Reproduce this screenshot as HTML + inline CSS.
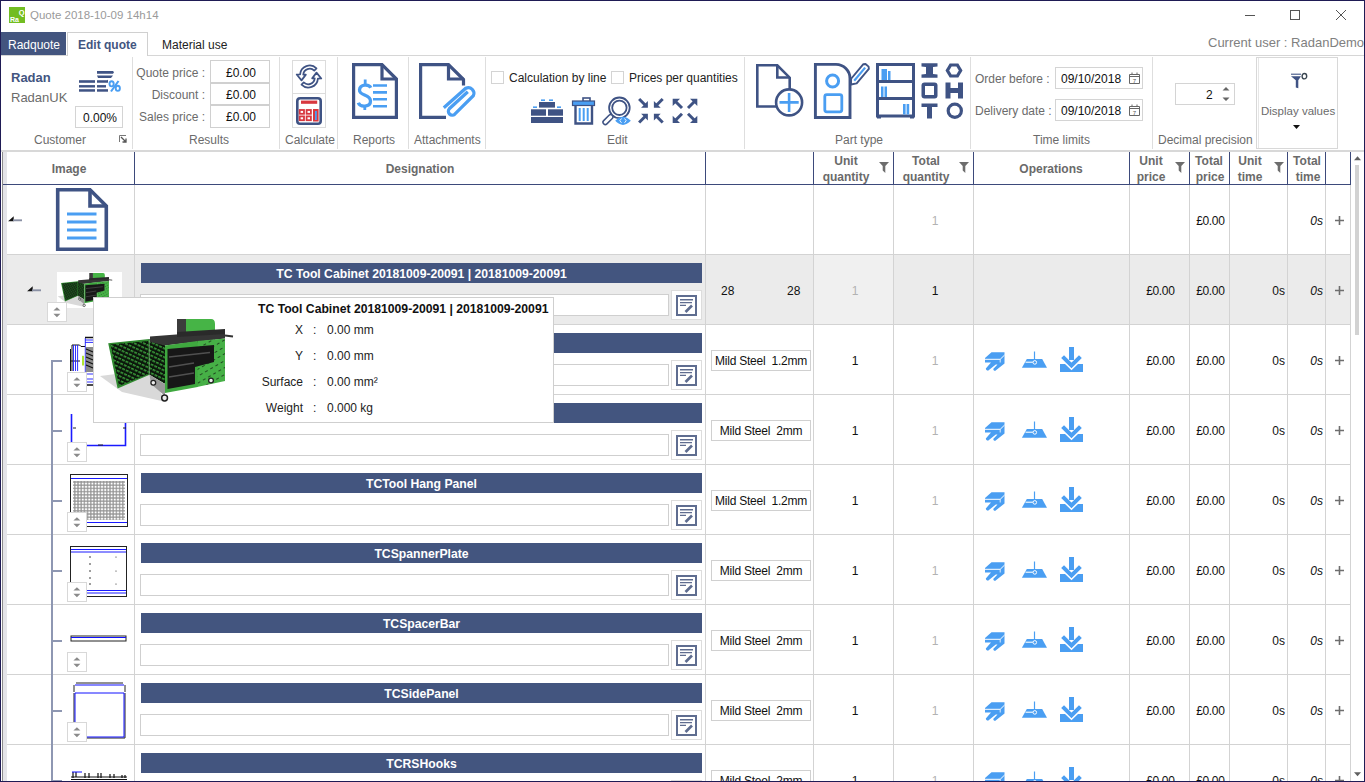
<!DOCTYPE html><html><head><meta charset="utf-8"><style>
html,body{margin:0;padding:0;}
body{width:1365px;height:782px;position:relative;overflow:hidden;background:#fff;font-family:"Liberation Sans",sans-serif;}
.t{position:absolute;white-space:nowrap;line-height:1;}
svg{overflow:visible}
</style></head><body>
<svg style="position:absolute;left:9px;top:7px" width="16" height="16" viewBox="0 0 16 16"><rect width="16" height="16" fill="#72bd22"/><text x="15.5" y="7.5" font-size="7.5" font-weight="bold" fill="#fff" text-anchor="end" font-family="Liberation Sans">Q</text><text x="1" y="15" font-size="7" font-weight="bold" fill="#fff" font-family="Liberation Sans">Ra</text></svg>
<div class="t" style="left:30px;top:10.27px;font-size:11.5px;color:#9a9a9a;font-weight:normal;font-style:normal;">Quote 2018-10-09 14h14</div>
<div style="position:absolute;left:1245px;top:15px;width:10px;height:1px;background:#555"></div>
<div style="position:absolute;left:1290px;top:10px;width:9px;height:9px;border:1px solid #555;box-sizing:border-box;width:10px;height:10px"></div>
<svg style="position:absolute;left:1336px;top:10px" width="10" height="10" viewBox="0 0 10 10"><path d="M0 0L10 10M10 0L0 10" stroke="#555" stroke-width="1"/></svg>
<div style="position:absolute;left:1px;top:32px;width:65px;height:23px;background:#43557f"></div>
<div class="t" style="left:8px;top:38.84px;font-size:12px;color:#fff;font-weight:normal;font-style:normal;">Radquote</div>
<div style="position:absolute;left:67px;top:32px;width:81px;height:24px;border:1px solid #d0d0d0;border-bottom:none;box-sizing:border-box;background:#fff"></div>
<div class="t" style="left:78px;top:38.84px;font-size:12px;color:#43557f;font-weight:bold;font-style:normal;">Edit quote</div>
<div class="t" style="left:162px;top:38.84px;font-size:12px;color:#222;font-weight:normal;font-style:normal;">Material use</div>
<div class="t" style="left:1208px;top:36.0px;font-size:13px;color:#808080;font-weight:normal;font-style:normal;">Current user : RadanDemo</div>
<div style="position:absolute;left:1px;top:55px;width:66px;height:1px;background:#d6d6d6"></div>
<div style="position:absolute;left:148px;top:55px;width:1216px;height:1px;background:#d6d6d6"></div>
<div style="position:absolute;left:1px;top:150px;width:1363px;height:2px;background:#d8d8d8"></div>
<div style="position:absolute;left:132px;top:57px;width:1px;height:92px;background:#dedede"></div>
<div style="position:absolute;left:279px;top:57px;width:1px;height:92px;background:#dedede"></div>
<div style="position:absolute;left:337px;top:57px;width:1px;height:92px;background:#dedede"></div>
<div style="position:absolute;left:408px;top:57px;width:1px;height:92px;background:#dedede"></div>
<div style="position:absolute;left:485px;top:57px;width:1px;height:92px;background:#dedede"></div>
<div style="position:absolute;left:744px;top:57px;width:1px;height:92px;background:#dedede"></div>
<div style="position:absolute;left:970px;top:57px;width:1px;height:92px;background:#dedede"></div>
<div style="position:absolute;left:1152px;top:57px;width:1px;height:92px;background:#dedede"></div>
<div class="t" style="left:11px;top:71.0px;font-size:13px;color:#43557f;font-weight:bold;font-style:normal;">Radan</div>
<div class="t" style="left:11px;top:91.0px;font-size:13px;color:#6b6b6b;font-weight:normal;font-style:normal;">RadanUK</div>
<svg style="position:absolute;left:79px;top:71px" width="42" height="21" viewBox="0 0 42 21"><g fill="#3f5384">
<rect x="0" y="9.2" width="16" height="2.6"/><rect x="0" y="14.1" width="16" height="2.4"/><rect x="0" y="18.2" width="16" height="2.5"/>
<path d="M18 0h16l1 1.3-1 1.4H18z"/><path d="M18 4.5h16l-2 2.5H19z"/><path d="M18 9.2h10l1-.4v2.9H18z"/><rect x="18" y="14.1" width="9" height="2.4"/><rect x="18" y="18.2" width="11" height="2.5"/>
</g><g fill="none" stroke="#4a9ef2"><ellipse cx="32.6" cy="12.8" rx="2.1" ry="2.6" stroke-width="1.9"/><ellipse cx="38.8" cy="17.3" rx="2.1" ry="2.6" stroke-width="1.9"/><path d="M39.5 10L32 20.5" stroke-width="2.1"/></g></svg>
<div style="position:absolute;left:75px;top:106px;width:48px;height:22px;border:1px solid #d4d4d4;box-sizing:border-box"></div>
<div class="t" style="left:83px;top:111.84px;font-size:12px;color:#111;font-weight:normal;font-style:normal;">0.00%</div>
<div class="t" style="left:34px;top:133.84px;font-size:12px;color:#6b6b6b;font-weight:normal;font-style:normal;">Customer</div>
<svg style="position:absolute;left:119px;top:135px" width="8" height="8" viewBox="0 0 8 8"><path d="M0.5 7V0.5H7" stroke="#777" fill="none"/><path d="M2 2L7 7M7 3.5V7H3.5" stroke="#555" fill="none" stroke-width="1.3"/></svg>
<div class="t" style="right:1160px;top:66.84px;font-size:12px;color:#6b6b6b;font-weight:normal;font-style:normal;">Quote price :</div>
<div class="t" style="right:1160px;top:88.84px;font-size:12px;color:#6b6b6b;font-weight:normal;font-style:normal;">Discount :</div>
<div class="t" style="right:1160px;top:110.84px;font-size:12px;color:#6b6b6b;font-weight:normal;font-style:normal;">Sales price :</div>
<div style="position:absolute;left:210px;top:60px;width:60px;height:23px;border:1px solid #d0d0d0;box-sizing:border-box"></div>
<div style="position:absolute;left:210px;top:83px;width:60px;height:22px;border:1px solid #d0d0d0;box-sizing:border-box"></div>
<div style="position:absolute;left:210px;top:105px;width:60px;height:23px;border:1px solid #d0d0d0;box-sizing:border-box"></div>
<div class="t" style="left:226px;top:66.84px;font-size:12px;color:#111;font-weight:normal;font-style:normal;">£0.00</div>
<div class="t" style="left:226px;top:88.84px;font-size:12px;color:#111;font-weight:normal;font-style:normal;">£0.00</div>
<div class="t" style="left:226px;top:110.84px;font-size:12px;color:#111;font-weight:normal;font-style:normal;">£0.00</div>
<div class="t" style="left:189px;top:133.84px;font-size:12px;color:#6b6b6b;font-weight:normal;font-style:normal;">Results</div>
<div style="position:absolute;left:292px;top:60px;width:34px;height:34px;border:1px solid #dcdcdc;box-sizing:border-box"></div>
<div style="position:absolute;left:292px;top:93px;width:34px;height:35px;border:1px solid #dcdcdc;box-sizing:border-box"></div>
<svg style="position:absolute;left:295px;top:64px" width="28" height="25" viewBox="0 0 28 25"><g transform="translate(14,12.5) scale(1.17) translate(-12,-12)" fill="#fff" stroke="#3f5384" stroke-width="1.5" stroke-linejoin="round">
<path d="M4.4 10.2 A8.2 8.2 0 0 1 18.4 5 L16.5 6.9 A5.6 5.6 0 0 0 7.1 10.4 L9.3 10.4 L5.6 15.3 L1.5 10.3 Z"/>
<path d="M19.6 13.8 A8.2 8.2 0 0 1 5.6 19 L7.5 17.1 A5.6 5.6 0 0 0 16.9 13.6 L14.7 13.6 L18.4 8.7 L22.5 13.7 Z"/>
</g></svg>
<svg style="position:absolute;left:296px;top:97px" width="26" height="28" viewBox="0 0 26 28"><rect x="1.3" y="1.3" width="23.4" height="25.4" rx="2.8" fill="#fff" stroke="#3f5384" stroke-width="2.6"/>
<rect x="5" y="3.6" width="16.2" height="3.2" fill="#d8383f"/>
<g fill="none" stroke="#d8383f" stroke-width="1.8"><rect x="3.7" y="13" width="4.3" height="3.8"/><rect x="10.6" y="13" width="4.3" height="3.8"/><rect x="3.7" y="19.4" width="4.3" height="3.8"/><rect x="10.6" y="19.4" width="4.3" height="3.8"/></g>
<rect x="17" y="12" width="5.6" height="12.5" fill="#d8383f"/><rect x="19" y="14" width="1.8" height="9" fill="#4a9ef2"/></svg>
<div class="t" style="left:285px;top:133.84px;font-size:12px;color:#6b6b6b;font-weight:normal;font-style:normal;">Calculate</div>
<svg style="position:absolute;left:352px;top:63px" width="46" height="56" viewBox="0 0 46 56"><path d="M1.6 1.6H30L44.4 16V54.4H1.6Z" fill="#fff" stroke="#3f5384" stroke-width="3.2"/>
<path d="M30 1.6V16H44.4" fill="none" stroke="#3f5384" stroke-width="3.2"/>
<g stroke="#4a9ef2" stroke-width="2.6"><path d="M21 22.5H35M21 29.4H35M21 36.3H35M21 43.2H35"/></g>
<path d="M18.8 24.8 C17 21 8 21 7.5 27 C7 33 18.5 31 18.5 38 C18.5 44.5 8 44.5 6.3 39.8" fill="none" stroke="#4a9ef2" stroke-width="3.3"/>
<path d="M13.2 16.5V23M12.8 43V47" stroke="#4a9ef2" stroke-width="2.8"/></svg>
<div class="t" style="left:353px;top:133.84px;font-size:12px;color:#6b6b6b;font-weight:normal;font-style:normal;">Reports</div>
<svg style="position:absolute;left:419px;top:63px" width="58" height="56" viewBox="0 0 58 56"><path d="M1.6 22V1.6H29.5L44.5 16.5V22.5M1.6 20V54.4H27" fill="none" stroke="#3f5384" stroke-width="3.2"/>
<path d="M29.5 1.6V16H44.5" fill="none" stroke="#3f5384" stroke-width="3.2"/>
<g fill="none" stroke="#4a9ef2" stroke-width="3.2" stroke-linecap="butt" transform="translate(-2.2,1.2)">
<path d="M27 43.5 L49 24 A5.6 5.6 0 0 1 56.5 31.5 L38 50 A3.9 3.9 0 0 1 32.5 44.5 L51 27.5"/>
</g></svg>
<div class="t" style="left:414px;top:133.84px;font-size:12px;color:#6b6b6b;font-weight:normal;font-style:normal;">Attachments</div>
<div style="position:absolute;left:491px;top:71px;width:13px;height:13px;border:1px solid #d4d4d4;box-sizing:border-box"></div>
<div class="t" style="left:509px;top:71.84px;font-size:12px;color:#222;font-weight:normal;font-style:normal;">Calculation by line</div>
<div style="position:absolute;left:611px;top:71px;width:13px;height:13px;border:1px solid #d4d4d4;box-sizing:border-box"></div>
<div class="t" style="left:629px;top:71.84px;font-size:12px;color:#222;font-weight:normal;font-style:normal;">Prices per quantities</div>
<svg style="position:absolute;left:531px;top:99px" width="33" height="24" viewBox="0 0 33 24"><g fill="#3f5384"><rect x="0" y="18" width="32" height="6"/><rect x="0" y="10.3" width="15" height="6.4"/><rect x="17" y="10.3" width="15" height="6.4"/><rect x="8" y="3" width="16" height="5.6"/></g>
<g fill="#4a9ef2"><rect x="10" y="0.4" width="4" height="1.6"/><rect x="18" y="0.4" width="4" height="1.6"/><rect x="2" y="7.4" width="4" height="1.6"/><rect x="26" y="7.4" width="4" height="1.6"/></g></svg>
<svg style="position:absolute;left:572px;top:97px" width="23" height="28" viewBox="0 0 23 28"><rect x="11" y="1" width="7" height="3.5" fill="none" stroke="#3f5384" stroke-width="1.6"/>
<rect x="0.5" y="4" width="22" height="4.5" fill="#4a9ef2" stroke="#3f5384" stroke-width="1.2"/>
<path d="M3.5 9V26.5H20V9" fill="none" stroke="#3f5384" stroke-width="2.4"/>
<g stroke="#4a9ef2" stroke-width="2"><path d="M7.7 11V24M11.7 11V24M15.7 11V24"/></g></svg>
<svg style="position:absolute;left:603px;top:97px" width="29" height="29" viewBox="0 0 29 29"><circle cx="16.4" cy="10.8" r="10.3" fill="none" stroke="#3f5384" stroke-width="1.8"/>
<circle cx="16.4" cy="10.8" r="7.2" fill="none" stroke="#3f5384" stroke-width="1.8"/>
<g transform="translate(8.5,19) rotate(-45)"><rect x="-11" y="-2.3" width="12" height="4.6" rx="2.2" fill="#fff" stroke="#3f5384" stroke-width="1.5"/></g>
<path d="M12.2 23.8 Q20 15.5 27.8 23.8 Q20 32 12.2 23.8Z" fill="#4a9ef2"/><path d="M18.5 21.5L16.8 23.7L18.5 25.8M21.5 21.5L23.2 23.7L21.5 25.8" stroke="#fff" stroke-width="0.9" fill="none"/></svg>
<svg style="position:absolute;left:639px;top:99px" width="25" height="25" viewBox="0 0 25 25"><g transform="translate(8.6,8.5) rotate(0)"><path d="M-8.5 -8.5L-2.5 -2.5" stroke="#3f5384" stroke-width="3"/><path d="M0.3 0.3H-6.5L0.3 -6.5Z" fill="#3f5384"/></g><g transform="translate(15.2,8.5) rotate(90)"><path d="M-8.5 -8.5L-2.5 -2.5" stroke="#3f5384" stroke-width="3"/><path d="M0.3 0.3H-6.5L0.3 -6.5Z" fill="#3f5384"/></g><g transform="translate(8.6,15) rotate(270)"><path d="M-8.5 -8.5L-2.5 -2.5" stroke="#3f5384" stroke-width="3"/><path d="M0.3 0.3H-6.5L0.3 -6.5Z" fill="#3f5384"/></g><g transform="translate(15.2,15) rotate(180)"><path d="M-8.5 -8.5L-2.5 -2.5" stroke="#3f5384" stroke-width="3"/><path d="M0.3 0.3H-6.5L0.3 -6.5Z" fill="#3f5384"/></g></svg>
<svg style="position:absolute;left:672px;top:98px" width="26" height="26" viewBox="0 0 26 26"><g transform="translate(1,1) rotate(180)"><path d="M-9 -9L-2.5 -2.5" stroke="#3f5384" stroke-width="3"/><path d="M0.3 0.3H-7L0.3 -7Z" fill="#3f5384"/></g><g transform="translate(25,1) rotate(270)"><path d="M-9 -9L-2.5 -2.5" stroke="#3f5384" stroke-width="3"/><path d="M0.3 0.3H-7L0.3 -7Z" fill="#3f5384"/></g><g transform="translate(1,24.8) rotate(90)"><path d="M-9 -9L-2.5 -2.5" stroke="#3f5384" stroke-width="3"/><path d="M0.3 0.3H-7L0.3 -7Z" fill="#3f5384"/></g><g transform="translate(25,24.8) rotate(0)"><path d="M-9 -9L-2.5 -2.5" stroke="#3f5384" stroke-width="3"/><path d="M0.3 0.3H-7L0.3 -7Z" fill="#3f5384"/></g></svg>
<div class="t" style="left:607px;top:133.84px;font-size:12px;color:#6b6b6b;font-weight:normal;font-style:normal;">Edit</div>
<svg style="position:absolute;left:756px;top:64px" width="48" height="54" viewBox="0 0 48 54"><path d="M23 42.5H1.3V1.3H21.3L33.7 13.7V25" fill="none" stroke="#3f5384" stroke-width="2.6"/>
<path d="M21.3 1.3V13.5H33.7" fill="none" stroke="#3f5384" stroke-width="2.6"/>
<circle cx="33.1" cy="38.4" r="13" fill="#fff" stroke="#3f5384" stroke-width="2.6"/>
<path d="M33.1 29V48M23.5 38.4H42.7" stroke="#4a9ef2" stroke-width="2.6"/></svg>
<svg style="position:absolute;left:814px;top:63px" width="58" height="56" viewBox="0 0 58 56"><path d="M1.4 1.4H22 A14 14 0 0 1 36 15.4V54.5H1.4Z" fill="#fff" stroke="#3f5384" stroke-width="2.9"/>
<circle cx="18.6" cy="18" r="6" fill="none" stroke="#4a9ef2" stroke-width="3"/>
<rect x="10.8" y="31.6" width="17" height="17.2" rx="2" fill="none" stroke="#4a9ef2" stroke-width="2.8"/>
<g transform="translate(37,21.5) rotate(-50)"><path d="M0 0L4.5 -3.6H23.5L25 -2V2L23.5 3.6H4.5Z" fill="#fff" stroke="#3f5384" stroke-width="1.9" stroke-linejoin="round"/><path d="M5 0H22" stroke="#4a9ef2" stroke-width="2.2"/></g></svg>
<svg style="position:absolute;left:876px;top:63px" width="39" height="56" viewBox="0 0 39 56"><rect x="1.5" y="1.5" width="36" height="51.5" fill="none" stroke="#3f5384" stroke-width="3"/>
<path d="M1.5 18.5H37.5M1.5 35.5H37.5" stroke="#3f5384" stroke-width="3"/>
<path d="M1 52V55.5H5V52M34 52V55.5H38V52" fill="#3f5384"/>
<g fill="#4a9ef2"><rect x="5.5" y="6" width="5.5" height="11"/><rect x="12" y="8" width="2.5" height="9"/><rect x="5" y="23.5" width="2.5" height="10.5"/><rect x="8.5" y="23.5" width="2.5" height="10.5"/><rect x="27" y="41" width="2.6" height="10.5"/><rect x="30.6" y="41" width="2.6" height="10.5"/></g></svg>
<svg style="position:absolute;left:921px;top:63px" width="43" height="56" viewBox="0 0 43 56"><g fill="#3f5384">
<path d="M0.5 0.3H16.5V3.5L12 4V11L16.5 11.5V14.7H0.5V11.5L5 11V4L0.5 3.5Z"/>
<rect x="0.5" y="19.5" width="16" height="16" rx="3"/>
<path d="M0.5 40.5H16.5V44H11V55.5H6V44H0.5Z"/>
<path d="M24.5 7.5L28.7 0.5H37.3L41.5 7.5L37.3 14.5H28.7Z"/>
<path d="M24.5 19.5H29.5V25H37V19.5H42V35.5H37V30H29.5V35.5H24.5Z"/>
<circle cx="33.8" cy="47.7" r="8.2"/>
</g>
<rect x="4" y="23" width="9" height="9" fill="#fff"/>
<path d="M28.2 7.5L30.6 3.5H35.4L37.8 7.5L35.4 11.5H30.6Z" fill="#fff"/>
<circle cx="33.8" cy="47.7" r="5" fill="#fff"/></svg>
<div class="t" style="left:835px;top:133.84px;font-size:12px;color:#6b6b6b;font-weight:normal;font-style:normal;">Part type</div>
<div class="t" style="left:975px;top:72.84px;font-size:12px;color:#6b6b6b;font-weight:normal;font-style:normal;">Order before :</div>
<div class="t" style="left:975px;top:104.84px;font-size:12px;color:#6b6b6b;font-weight:normal;font-style:normal;">Delivery date :</div>
<div style="position:absolute;left:1055px;top:67px;width:88px;height:22px;border:1px solid #d4d4d4;box-sizing:border-box"></div>
<div class="t" style="left:1061px;top:72.84px;font-size:12px;color:#111;font-weight:normal;font-style:normal;">09/10/2018</div>
<svg style="position:absolute;left:1129px;top:72px" width="11" height="12" viewBox="0 0 11 12"><path d="M0.5 2.5H10.5V11.5H0.5Z M0.5 4.5H10.5" fill="none" stroke="#666" stroke-width="1"/><path d="M3 0.5V3M8 0.5V3" stroke="#666"/><text x="5.5" y="10.5" font-size="6" text-anchor="middle" fill="#555" font-family="Liberation Sans">7</text></svg>
<div style="position:absolute;left:1055px;top:99px;width:88px;height:22px;border:1px solid #d4d4d4;box-sizing:border-box"></div>
<div class="t" style="left:1061px;top:104.84px;font-size:12px;color:#111;font-weight:normal;font-style:normal;">09/10/2018</div>
<svg style="position:absolute;left:1129px;top:104px" width="11" height="12" viewBox="0 0 11 12"><path d="M0.5 2.5H10.5V11.5H0.5Z M0.5 4.5H10.5" fill="none" stroke="#666" stroke-width="1"/><path d="M3 0.5V3M8 0.5V3" stroke="#666"/><text x="5.5" y="10.5" font-size="6" text-anchor="middle" fill="#555" font-family="Liberation Sans">7</text></svg>
<div class="t" style="left:1033px;top:133.84px;font-size:12px;color:#6b6b6b;font-weight:normal;font-style:normal;">Time limits</div>
<div style="position:absolute;left:1175px;top:83px;width:60px;height:22px;border:1px solid #d4d4d4;box-sizing:border-box"></div>
<div class="t" style="left:1206px;top:88.84px;font-size:12px;color:#111;font-weight:normal;font-style:normal;">2</div>
<svg style="position:absolute;left:1222px;top:86px" width="8" height="16" viewBox="0 0 8 16"><path d="M0.5 4.5L4 1L7.5 4.5Z M0.5 11.5L4 15L7.5 11.5Z" fill="#666"/></svg>
<div class="t" style="left:1158px;top:133.84px;font-size:12px;color:#6b6b6b;font-weight:normal;font-style:normal;">Decimal precision</div>
<div style="position:absolute;left:1256px;top:57px;width:82px;height:92px;border:1px solid #d8d8d8;box-sizing:border-box"></div>
<div style="position:absolute;left:1258px;top:58px;width:1px;height:90px;background:#e6e6e6"></div>
<svg style="position:absolute;left:1290px;top:73px" width="18" height="16" viewBox="0 0 18 16"><path d="M1 1.2H11" stroke="#3f5384" stroke-width="1.1"/><path d="M1 3.2H11L8.3 7.3V15.2L5.8 14.6V7.3Z" fill="#3f5384"/><ellipse cx="14.4" cy="3.2" rx="2.3" ry="2.7" fill="none" stroke="#3b4752" stroke-width="1.4"/></svg>
<div class="t" style="left:1261px;top:106.27px;font-size:11.5px;color:#6b6b6b;font-weight:normal;font-style:normal;">Display values</div>
<svg style="position:absolute;left:1293px;top:125px" width="8" height="5" viewBox="0 0 8 5"><path d="M0 0H7L3.5 4Z" fill="#111"/></svg>
<div style="position:absolute;left:2px;top:152px;width:1px;height:629px;background:#8c8c8c"></div>
<div style="position:absolute;left:3px;top:152px;width:4px;height:629px;background:#e4e4e8"></div>
<div style="position:absolute;left:3px;top:184px;width:1348px;height:1px;background:#3d4a7b"></div>
<div style="position:absolute;left:134px;top:152px;width:1px;height:33px;background:#3d4a7b"></div>
<div style="position:absolute;left:705px;top:152px;width:1px;height:33px;background:#3d4a7b"></div>
<div style="position:absolute;left:813px;top:152px;width:1px;height:33px;background:#3d4a7b"></div>
<div style="position:absolute;left:893px;top:152px;width:1px;height:33px;background:#3d4a7b"></div>
<div style="position:absolute;left:973px;top:152px;width:1px;height:33px;background:#3d4a7b"></div>
<div style="position:absolute;left:1129px;top:152px;width:1px;height:33px;background:#3d4a7b"></div>
<div style="position:absolute;left:1189px;top:152px;width:1px;height:33px;background:#3d4a7b"></div>
<div style="position:absolute;left:1229px;top:152px;width:1px;height:33px;background:#3d4a7b"></div>
<div style="position:absolute;left:1287px;top:152px;width:1px;height:33px;background:#3d4a7b"></div>
<div style="position:absolute;left:1325px;top:152px;width:1px;height:33px;background:#3d4a7b"></div>
<div style="position:absolute;left:1350px;top:152px;width:1px;height:33px;background:#3d4a7b"></div>
<div class="t" style="left:69px;transform:translateX(-50%);top:162.84px;font-size:12px;color:#6a6a6a;font-weight:bold;font-style:normal;">Image</div>
<div class="t" style="left:420px;transform:translateX(-50%);top:162.84px;font-size:12px;color:#6a6a6a;font-weight:bold;font-style:normal;">Designation</div>
<div class="t" style="left:846px;transform:translateX(-50%);top:154.84px;font-size:12px;color:#6a6a6a;font-weight:bold;font-style:normal;">Unit</div>
<div class="t" style="left:846px;transform:translateX(-50%);top:170.84px;font-size:12px;color:#6a6a6a;font-weight:bold;font-style:normal;">quantity</div>
<svg style="position:absolute;left:879px;top:162px" width="10" height="11" viewBox="0 0 10 11"><path d="M0 0H10L6.3 4V11L3.7 8.5V4Z" fill="#6d6d6d"/></svg>
<div class="t" style="left:926px;transform:translateX(-50%);top:154.84px;font-size:12px;color:#6a6a6a;font-weight:bold;font-style:normal;">Total</div>
<div class="t" style="left:926px;transform:translateX(-50%);top:170.84px;font-size:12px;color:#6a6a6a;font-weight:bold;font-style:normal;">quantity</div>
<svg style="position:absolute;left:959px;top:162px" width="10" height="11" viewBox="0 0 10 11"><path d="M0 0H10L6.3 4V11L3.7 8.5V4Z" fill="#6d6d6d"/></svg>
<div class="t" style="left:1051px;transform:translateX(-50%);top:162.84px;font-size:12px;color:#6a6a6a;font-weight:bold;font-style:normal;">Operations</div>
<div class="t" style="left:1151px;transform:translateX(-50%);top:154.84px;font-size:12px;color:#6a6a6a;font-weight:bold;font-style:normal;">Unit</div>
<div class="t" style="left:1151px;transform:translateX(-50%);top:170.84px;font-size:12px;color:#6a6a6a;font-weight:bold;font-style:normal;">price</div>
<svg style="position:absolute;left:1175px;top:162px" width="10" height="11" viewBox="0 0 10 11"><path d="M0 0H10L6.3 4V11L3.7 8.5V4Z" fill="#6d6d6d"/></svg>
<div class="t" style="left:1209px;transform:translateX(-50%);top:154.84px;font-size:12px;color:#6a6a6a;font-weight:bold;font-style:normal;">Total</div>
<div class="t" style="left:1210px;transform:translateX(-50%);top:170.84px;font-size:12px;color:#6a6a6a;font-weight:bold;font-style:normal;">price</div>
<div class="t" style="left:1250px;transform:translateX(-50%);top:154.84px;font-size:12px;color:#6a6a6a;font-weight:bold;font-style:normal;">Unit</div>
<div class="t" style="left:1250px;transform:translateX(-50%);top:170.84px;font-size:12px;color:#6a6a6a;font-weight:bold;font-style:normal;">time</div>
<svg style="position:absolute;left:1274px;top:162px" width="10" height="11" viewBox="0 0 10 11"><path d="M0 0H10L6.3 4V11L3.7 8.5V4Z" fill="#6d6d6d"/></svg>
<div class="t" style="left:1307px;transform:translateX(-50%);top:154.84px;font-size:12px;color:#6a6a6a;font-weight:bold;font-style:normal;">Total</div>
<div class="t" style="left:1308px;transform:translateX(-50%);top:170.84px;font-size:12px;color:#6a6a6a;font-weight:bold;font-style:normal;">time</div>
<div style="position:absolute;left:7px;top:255px;width:1343px;height:69px;background:#ebebeb"></div>
<div style="position:absolute;left:813px;top:255px;width:80px;height:69px;background:#f0f0f0"></div>
<div style="position:absolute;left:134px;top:185px;width:1px;height:596px;background:#d3d3d3"></div>
<div style="position:absolute;left:705px;top:185px;width:1px;height:596px;background:#d3d3d3"></div>
<div style="position:absolute;left:813px;top:185px;width:1px;height:596px;background:#d3d3d3"></div>
<div style="position:absolute;left:893px;top:185px;width:1px;height:596px;background:#d3d3d3"></div>
<div style="position:absolute;left:973px;top:185px;width:1px;height:596px;background:#d3d3d3"></div>
<div style="position:absolute;left:1129px;top:185px;width:1px;height:596px;background:#d3d3d3"></div>
<div style="position:absolute;left:1189px;top:185px;width:1px;height:596px;background:#d3d3d3"></div>
<div style="position:absolute;left:1229px;top:185px;width:1px;height:596px;background:#d3d3d3"></div>
<div style="position:absolute;left:1287px;top:185px;width:1px;height:596px;background:#d3d3d3"></div>
<div style="position:absolute;left:1325px;top:185px;width:1px;height:596px;background:#d3d3d3"></div>
<div style="position:absolute;left:1350px;top:185px;width:1px;height:596px;background:#d3d3d3"></div>
<div style="position:absolute;left:7px;top:254px;width:1343px;height:1px;background:#d3d3d3"></div>
<div style="position:absolute;left:7px;top:324px;width:1343px;height:1px;background:#d3d3d3"></div>
<div style="position:absolute;left:7px;top:394px;width:1343px;height:1px;background:#d3d3d3"></div>
<div style="position:absolute;left:7px;top:464px;width:1343px;height:1px;background:#d3d3d3"></div>
<div style="position:absolute;left:7px;top:534px;width:1343px;height:1px;background:#d3d3d3"></div>
<div style="position:absolute;left:7px;top:604px;width:1343px;height:1px;background:#d3d3d3"></div>
<div style="position:absolute;left:7px;top:674px;width:1343px;height:1px;background:#d3d3d3"></div>
<div style="position:absolute;left:7px;top:744px;width:1343px;height:1px;background:#d3d3d3"></div>
<svg style="position:absolute;left:8px;top:216px" width="16" height="7" viewBox="0 0 16 7"><path d="M0.1 5.2L5.7 0.3V5.2Z" fill="#111"/><path d="M5 4.3H14" stroke="#8a90a4" stroke-width="1.9"/></svg>
<svg style="position:absolute;left:55px;top:187px" width="54" height="65" viewBox="0 0 54 65"><path d="M2.7 2.7H35L51.3 19V62.3H2.7Z" fill="#fff" stroke="#3f5384" stroke-width="3.6"/>
<path d="M35 2.7V19H51.3" fill="none" stroke="#3f5384" stroke-width="3.6"/>
<g stroke="#4a9ef2" stroke-width="3.2"><path d="M12 27H41.5M12 35H41.5M12 43H41.5M12 51H41.5"/></g></svg>
<div class="t" style="left:935px;transform:translateX(-50%);top:214.84px;font-size:12px;color:#b2b2b2;font-weight:normal;font-style:normal;">1</div>
<div class="t" style="right:140.5px;top:214.84px;font-size:12px;color:#111;font-weight:normal;font-style:normal;letter-spacing:-0.35px">£0.00</div>
<div class="t" style="right:42px;top:214.84px;font-size:12px;color:#111;font-weight:normal;font-style:italic;">0s</div>
<svg style="position:absolute;left:1335px;top:215.5px" width="9" height="9" viewBox="0 0 9 9"><path d="M4.5 0V9M0 4.5H9" stroke="#6e6e6e" stroke-width="1.6"/></svg>
<svg style="position:absolute;left:27px;top:286px" width="16" height="7" viewBox="0 0 16 7"><path d="M0.1 5.2L5.7 0.3V5.2Z" fill="#111"/><path d="M5 4.3H14" stroke="#8a90a4" stroke-width="1.9"/></svg>
<div style="position:absolute;left:57px;top:272px;width:65px;height:36px;background:#fff"></div>
<svg style="position:absolute;left:0;top:0" width="1365" height="782"><defs><pattern id="tex" width="4" height="4" patternUnits="userSpaceOnUse" patternTransform="rotate(25)"><rect width="4" height="4" fill="#0b150b"/><rect x="0" y="1" width="3" height="1.6" fill="#3a9a3a"/></pattern>
<pattern id="tex2" width="6" height="6" patternUnits="userSpaceOnUse" patternTransform="rotate(-30)"><rect width="6" height="6" fill="#46b046"/><rect x="1" y="2" width="3" height="1" fill="#234d23"/></pattern></defs><g transform="translate(57.7,270.1) scale(0.41)">
<path d="M0 64L48 58L66 90L22 80Z" fill="#d9d9d9"/>
<path d="M8.2 31.3L49.5 27L49.5 62.7L17.6 76.5Z" fill="#2f8a2f"/>
<path d="M10.5 32.5L48.5 29L48.5 62L19 74Z" fill="url(#tex)"/>
<path d="M49.5 27L65 33L65 72L49.5 62.7Z" fill="url(#tex)"/><path d="M49.5 62.7L65 72L65 84L51 72Z" fill="#9a9a9a"/>
<path d="M50 24.5L125 18.8L125 26.5L65 33.5L50 30Z" fill="#353535"/>
<path d="M77 7H86V24H77Z" fill="#3c3c3c"/>
<path d="M86 7H111Q115 7 115 12V19L86 23Z" fill="#46b446"/>
<path d="M77 20L125 17V22L77 25Z" fill="#2a2a2a"/>
<path d="M97 29L125 26.5L125 69L97 75Z" fill="url(#tex2)"/>
<path d="M65 33.5L97.6 29L97.6 75L65 81Z" fill="#3fa83f"/>
<path d="M67.5 37L114 33L114 50L95 55L95 72L67.5 77Z" fill="#171717"/>
<path d="M69 45L110 40.5M69 55L94 51M69 65L94 61" stroke="#505050" stroke-width="1.6"/>

<path d="M125 23.5L133 24.5" stroke="#333" stroke-width="2"/>
<circle cx="53.3" cy="70.8" r="2.4" fill="#eee" stroke="#222" stroke-width="1.3"/>
<circle cx="64.6" cy="86" r="2.9" fill="#eee" stroke="#222" stroke-width="1.5"/>
<circle cx="111" cy="68.5" r="2.4" fill="#eee" stroke="#222" stroke-width="1.3"/>
</g></svg>
<div style="position:absolute;left:47px;top:302px;width:20px;height:20px;border:1px solid #d8d8d8;box-sizing:border-box;background:#fff"></div>
<svg style="position:absolute;left:53px;top:307px" width="8" height="11" viewBox="0 0 8 11"><path d="M0.4 3.6L3.9 0.2L7.4 3.6Z M0.4 6.8L3.9 10.2L7.4 6.8Z" fill="#8a8a8a"/></svg>
<div style="position:absolute;left:141px;top:263px;width:561px;height:20px;background:#43557f"></div>
<div class="t" style="left:421.5px;transform:translateX(-50%);top:267.67px;font-size:12.2px;color:#fff;font-weight:bold;font-style:normal;">TC Tool Cabinet 20181009-20091 | 20181009-20091</div>
<div style="position:absolute;left:140px;top:294px;width:529px;height:22px;border:1px solid #cfcfcf;box-sizing:border-box;background:#fff"></div>
<div style="position:absolute;left:671px;top:290px;width:31px;height:30px;border:1px solid #dcdcdc;box-sizing:border-box;background:#fff"></div>
<svg style="position:absolute;left:676px;top:295px" width="21" height="21" viewBox="0 0 21 21"><rect x="1" y="1" width="19" height="19" fill="none" stroke="#5f6d90" stroke-width="2"/>
<path d="M4 4.8H17M4 7.6H16M4 10.4H10" stroke="#5f6d90" stroke-width="1.4"/><path d="M9.5 17L16 10.5" stroke="#5f6d90" stroke-width="2.6"/></svg>
<div class="t" style="left:721px;top:284.84px;font-size:12px;color:#111;font-weight:normal;font-style:normal;">28</div>
<div class="t" style="left:787px;top:284.84px;font-size:12px;color:#111;font-weight:normal;font-style:normal;">28</div>
<div class="t" style="left:855px;transform:translateX(-50%);top:284.84px;font-size:12px;color:#b2b2b2;font-weight:normal;font-style:normal;">1</div>
<div class="t" style="left:935px;transform:translateX(-50%);top:284.84px;font-size:12px;color:#111;font-weight:normal;font-style:normal;">1</div>
<div class="t" style="right:190.5px;top:284.84px;font-size:12px;color:#111;font-weight:normal;font-style:normal;letter-spacing:-0.35px">£0.00</div>
<div class="t" style="right:140.5px;top:284.84px;font-size:12px;color:#111;font-weight:normal;font-style:normal;letter-spacing:-0.35px">£0.00</div>
<div class="t" style="right:80px;top:284.84px;font-size:12px;color:#111;font-weight:normal;font-style:normal;">0s</div>
<div class="t" style="right:42px;top:284.84px;font-size:12px;color:#111;font-weight:normal;font-style:italic;">0s</div>
<svg style="position:absolute;left:1335px;top:285.5px" width="9" height="9" viewBox="0 0 9 9"><path d="M4.5 0V9M0 4.5H9" stroke="#6e6e6e" stroke-width="1.6"/></svg>
<div style="position:absolute;left:51px;top:360px;width:2px;height:421px;background:#8e97b2"></div>
<div style="position:absolute;left:51px;top:360px;width:11px;height:2px;background:#8e97b2"></div>
<div style="position:absolute;left:141px;top:333px;width:561px;height:20px;background:#43557f"></div>
<div style="position:absolute;left:140px;top:364px;width:529px;height:22px;border:1px solid #cfcfcf;box-sizing:border-box;background:#fff"></div>
<div style="position:absolute;left:671px;top:360px;width:31px;height:30px;border:1px solid #dcdcdc;box-sizing:border-box;background:#fff"></div>
<svg style="position:absolute;left:676px;top:365px" width="21" height="21" viewBox="0 0 21 21"><rect x="1" y="1" width="19" height="19" fill="none" stroke="#5f6d90" stroke-width="2"/>
<path d="M4 4.8H17M4 7.6H16M4 10.4H10" stroke="#5f6d90" stroke-width="1.4"/><path d="M9.5 17L16 10.5" stroke="#5f6d90" stroke-width="2.6"/></svg>
<div style="position:absolute;left:711px;top:350px;width:100px;height:21px;border:1px solid #d0d0d0;box-sizing:border-box;background:#fff"></div>
<div class="t" style="left:761px;transform:translateX(-50%);top:354.84px;font-size:12px;color:#111;font-weight:normal;font-style:normal;letter-spacing:-0.25px">Mild Steel&nbsp; 1.2mm</div>
<div class="t" style="left:855px;transform:translateX(-50%);top:354.84px;font-size:12px;color:#111;font-weight:normal;font-style:normal;">1</div>
<div class="t" style="left:935px;transform:translateX(-50%);top:354.84px;font-size:12px;color:#b2b2b2;font-weight:normal;font-style:normal;">1</div>
<svg style="position:absolute;left:985px;top:352px" width="20" height="19" viewBox="0 0 20 19"><path d="M0 6 L6.5 0.3 H19.5 V11.5 L10 19 Q8.3 18.6 8.2 17 L12.5 12.5 H10.8 L3 18.8 Q0.8 18.3 0.8 16.5 L6 10.5 H0 Z" fill="#4a9ef2"/>
<path d="M0 7.3 H15.2 L19.6 3" stroke="#fff" stroke-width="1" fill="none"/><path d="M15.2 7.3 V10.5" stroke="#fff" stroke-width="0.8"/></svg>
<svg style="position:absolute;left:1021px;top:351px" width="26" height="17" viewBox="0 0 26 17"><path d="M13.5 0.5V8" stroke="#4a9ef2" stroke-width="1.2"/><path d="M5.8 8H21.2L26 16.8H0.9Z" fill="#4a9ef2"/><path d="M4.5 11.2H11.8" stroke="#fff" stroke-width="1.1"/><circle cx="13.8" cy="11.4" r="1.8" fill="none" stroke="#fff" stroke-width="1"/></svg>
<svg style="position:absolute;left:1060px;top:347px" width="23" height="25" viewBox="0 0 23 25"><rect x="9" y="0" width="5" height="13" fill="#4a9ef2"/><path d="M2.6 9.6L11.5 18.5L20.4 9.6" fill="none" stroke="#4a9ef2" stroke-width="4"/><path d="M0 17H5L11.5 23.2L18 17H23V25H0Z" fill="#4a9ef2"/></svg>
<div class="t" style="right:190.5px;top:354.84px;font-size:12px;color:#111;font-weight:normal;font-style:normal;letter-spacing:-0.35px">£0.00</div>
<div class="t" style="right:140.5px;top:354.84px;font-size:12px;color:#111;font-weight:normal;font-style:normal;letter-spacing:-0.35px">£0.00</div>
<div class="t" style="right:80px;top:354.84px;font-size:12px;color:#111;font-weight:normal;font-style:normal;">0s</div>
<div class="t" style="right:42px;top:354.84px;font-size:12px;color:#111;font-weight:normal;font-style:italic;">0s</div>
<svg style="position:absolute;left:1335px;top:355.5px" width="9" height="9" viewBox="0 0 9 9"><path d="M4.5 0V9M0 4.5H9" stroke="#6e6e6e" stroke-width="1.6"/></svg>
<div style="position:absolute;left:51px;top:430px;width:11px;height:2px;background:#8e97b2"></div>
<div style="position:absolute;left:141px;top:403px;width:561px;height:20px;background:#43557f"></div>
<div style="position:absolute;left:140px;top:434px;width:529px;height:22px;border:1px solid #cfcfcf;box-sizing:border-box;background:#fff"></div>
<div style="position:absolute;left:671px;top:430px;width:31px;height:30px;border:1px solid #dcdcdc;box-sizing:border-box;background:#fff"></div>
<svg style="position:absolute;left:676px;top:435px" width="21" height="21" viewBox="0 0 21 21"><rect x="1" y="1" width="19" height="19" fill="none" stroke="#5f6d90" stroke-width="2"/>
<path d="M4 4.8H17M4 7.6H16M4 10.4H10" stroke="#5f6d90" stroke-width="1.4"/><path d="M9.5 17L16 10.5" stroke="#5f6d90" stroke-width="2.6"/></svg>
<div style="position:absolute;left:711px;top:420px;width:100px;height:21px;border:1px solid #d0d0d0;box-sizing:border-box;background:#fff"></div>
<div class="t" style="left:761px;transform:translateX(-50%);top:424.84px;font-size:12px;color:#111;font-weight:normal;font-style:normal;letter-spacing:-0.25px">Mild Steel&nbsp; 2mm</div>
<div class="t" style="left:855px;transform:translateX(-50%);top:424.84px;font-size:12px;color:#111;font-weight:normal;font-style:normal;">1</div>
<div class="t" style="left:935px;transform:translateX(-50%);top:424.84px;font-size:12px;color:#b2b2b2;font-weight:normal;font-style:normal;">1</div>
<svg style="position:absolute;left:985px;top:422px" width="20" height="19" viewBox="0 0 20 19"><path d="M0 6 L6.5 0.3 H19.5 V11.5 L10 19 Q8.3 18.6 8.2 17 L12.5 12.5 H10.8 L3 18.8 Q0.8 18.3 0.8 16.5 L6 10.5 H0 Z" fill="#4a9ef2"/>
<path d="M0 7.3 H15.2 L19.6 3" stroke="#fff" stroke-width="1" fill="none"/><path d="M15.2 7.3 V10.5" stroke="#fff" stroke-width="0.8"/></svg>
<svg style="position:absolute;left:1021px;top:421px" width="26" height="17" viewBox="0 0 26 17"><path d="M13.5 0.5V8" stroke="#4a9ef2" stroke-width="1.2"/><path d="M5.8 8H21.2L26 16.8H0.9Z" fill="#4a9ef2"/><path d="M4.5 11.2H11.8" stroke="#fff" stroke-width="1.1"/><circle cx="13.8" cy="11.4" r="1.8" fill="none" stroke="#fff" stroke-width="1"/></svg>
<svg style="position:absolute;left:1060px;top:417px" width="23" height="25" viewBox="0 0 23 25"><rect x="9" y="0" width="5" height="13" fill="#4a9ef2"/><path d="M2.6 9.6L11.5 18.5L20.4 9.6" fill="none" stroke="#4a9ef2" stroke-width="4"/><path d="M0 17H5L11.5 23.2L18 17H23V25H0Z" fill="#4a9ef2"/></svg>
<div class="t" style="right:190.5px;top:424.84px;font-size:12px;color:#111;font-weight:normal;font-style:normal;letter-spacing:-0.35px">£0.00</div>
<div class="t" style="right:140.5px;top:424.84px;font-size:12px;color:#111;font-weight:normal;font-style:normal;letter-spacing:-0.35px">£0.00</div>
<div class="t" style="right:80px;top:424.84px;font-size:12px;color:#111;font-weight:normal;font-style:normal;">0s</div>
<div class="t" style="right:42px;top:424.84px;font-size:12px;color:#111;font-weight:normal;font-style:italic;">0s</div>
<svg style="position:absolute;left:1335px;top:425.5px" width="9" height="9" viewBox="0 0 9 9"><path d="M4.5 0V9M0 4.5H9" stroke="#6e6e6e" stroke-width="1.6"/></svg>
<div style="position:absolute;left:51px;top:500px;width:11px;height:2px;background:#8e97b2"></div>
<div style="position:absolute;left:141px;top:473px;width:561px;height:20px;background:#43557f"></div>
<div class="t" style="left:421.5px;transform:translateX(-50%);top:477.67px;font-size:12.2px;color:#fff;font-weight:bold;font-style:normal;">TCTool Hang Panel</div>
<div style="position:absolute;left:140px;top:504px;width:529px;height:22px;border:1px solid #cfcfcf;box-sizing:border-box;background:#fff"></div>
<div style="position:absolute;left:671px;top:500px;width:31px;height:30px;border:1px solid #dcdcdc;box-sizing:border-box;background:#fff"></div>
<svg style="position:absolute;left:676px;top:505px" width="21" height="21" viewBox="0 0 21 21"><rect x="1" y="1" width="19" height="19" fill="none" stroke="#5f6d90" stroke-width="2"/>
<path d="M4 4.8H17M4 7.6H16M4 10.4H10" stroke="#5f6d90" stroke-width="1.4"/><path d="M9.5 17L16 10.5" stroke="#5f6d90" stroke-width="2.6"/></svg>
<div style="position:absolute;left:711px;top:490px;width:100px;height:21px;border:1px solid #d0d0d0;box-sizing:border-box;background:#fff"></div>
<div class="t" style="left:761px;transform:translateX(-50%);top:494.84px;font-size:12px;color:#111;font-weight:normal;font-style:normal;letter-spacing:-0.25px">Mild Steel&nbsp; 1.2mm</div>
<div class="t" style="left:855px;transform:translateX(-50%);top:494.84px;font-size:12px;color:#111;font-weight:normal;font-style:normal;">1</div>
<div class="t" style="left:935px;transform:translateX(-50%);top:494.84px;font-size:12px;color:#b2b2b2;font-weight:normal;font-style:normal;">1</div>
<svg style="position:absolute;left:985px;top:492px" width="20" height="19" viewBox="0 0 20 19"><path d="M0 6 L6.5 0.3 H19.5 V11.5 L10 19 Q8.3 18.6 8.2 17 L12.5 12.5 H10.8 L3 18.8 Q0.8 18.3 0.8 16.5 L6 10.5 H0 Z" fill="#4a9ef2"/>
<path d="M0 7.3 H15.2 L19.6 3" stroke="#fff" stroke-width="1" fill="none"/><path d="M15.2 7.3 V10.5" stroke="#fff" stroke-width="0.8"/></svg>
<svg style="position:absolute;left:1021px;top:491px" width="26" height="17" viewBox="0 0 26 17"><path d="M13.5 0.5V8" stroke="#4a9ef2" stroke-width="1.2"/><path d="M5.8 8H21.2L26 16.8H0.9Z" fill="#4a9ef2"/><path d="M4.5 11.2H11.8" stroke="#fff" stroke-width="1.1"/><circle cx="13.8" cy="11.4" r="1.8" fill="none" stroke="#fff" stroke-width="1"/></svg>
<svg style="position:absolute;left:1060px;top:487px" width="23" height="25" viewBox="0 0 23 25"><rect x="9" y="0" width="5" height="13" fill="#4a9ef2"/><path d="M2.6 9.6L11.5 18.5L20.4 9.6" fill="none" stroke="#4a9ef2" stroke-width="4"/><path d="M0 17H5L11.5 23.2L18 17H23V25H0Z" fill="#4a9ef2"/></svg>
<div class="t" style="right:190.5px;top:494.84px;font-size:12px;color:#111;font-weight:normal;font-style:normal;letter-spacing:-0.35px">£0.00</div>
<div class="t" style="right:140.5px;top:494.84px;font-size:12px;color:#111;font-weight:normal;font-style:normal;letter-spacing:-0.35px">£0.00</div>
<div class="t" style="right:80px;top:494.84px;font-size:12px;color:#111;font-weight:normal;font-style:normal;">0s</div>
<div class="t" style="right:42px;top:494.84px;font-size:12px;color:#111;font-weight:normal;font-style:italic;">0s</div>
<svg style="position:absolute;left:1335px;top:495.5px" width="9" height="9" viewBox="0 0 9 9"><path d="M4.5 0V9M0 4.5H9" stroke="#6e6e6e" stroke-width="1.6"/></svg>
<div style="position:absolute;left:51px;top:570px;width:11px;height:2px;background:#8e97b2"></div>
<div style="position:absolute;left:141px;top:543px;width:561px;height:20px;background:#43557f"></div>
<div class="t" style="left:421.5px;transform:translateX(-50%);top:547.67px;font-size:12.2px;color:#fff;font-weight:bold;font-style:normal;">TCSpannerPlate</div>
<div style="position:absolute;left:140px;top:574px;width:529px;height:22px;border:1px solid #cfcfcf;box-sizing:border-box;background:#fff"></div>
<div style="position:absolute;left:671px;top:570px;width:31px;height:30px;border:1px solid #dcdcdc;box-sizing:border-box;background:#fff"></div>
<svg style="position:absolute;left:676px;top:575px" width="21" height="21" viewBox="0 0 21 21"><rect x="1" y="1" width="19" height="19" fill="none" stroke="#5f6d90" stroke-width="2"/>
<path d="M4 4.8H17M4 7.6H16M4 10.4H10" stroke="#5f6d90" stroke-width="1.4"/><path d="M9.5 17L16 10.5" stroke="#5f6d90" stroke-width="2.6"/></svg>
<div style="position:absolute;left:711px;top:560px;width:100px;height:21px;border:1px solid #d0d0d0;box-sizing:border-box;background:#fff"></div>
<div class="t" style="left:761px;transform:translateX(-50%);top:564.84px;font-size:12px;color:#111;font-weight:normal;font-style:normal;letter-spacing:-0.25px">Mild Steel&nbsp; 2mm</div>
<div class="t" style="left:855px;transform:translateX(-50%);top:564.84px;font-size:12px;color:#111;font-weight:normal;font-style:normal;">1</div>
<div class="t" style="left:935px;transform:translateX(-50%);top:564.84px;font-size:12px;color:#b2b2b2;font-weight:normal;font-style:normal;">1</div>
<svg style="position:absolute;left:985px;top:562px" width="20" height="19" viewBox="0 0 20 19"><path d="M0 6 L6.5 0.3 H19.5 V11.5 L10 19 Q8.3 18.6 8.2 17 L12.5 12.5 H10.8 L3 18.8 Q0.8 18.3 0.8 16.5 L6 10.5 H0 Z" fill="#4a9ef2"/>
<path d="M0 7.3 H15.2 L19.6 3" stroke="#fff" stroke-width="1" fill="none"/><path d="M15.2 7.3 V10.5" stroke="#fff" stroke-width="0.8"/></svg>
<svg style="position:absolute;left:1021px;top:561px" width="26" height="17" viewBox="0 0 26 17"><path d="M13.5 0.5V8" stroke="#4a9ef2" stroke-width="1.2"/><path d="M5.8 8H21.2L26 16.8H0.9Z" fill="#4a9ef2"/><path d="M4.5 11.2H11.8" stroke="#fff" stroke-width="1.1"/><circle cx="13.8" cy="11.4" r="1.8" fill="none" stroke="#fff" stroke-width="1"/></svg>
<svg style="position:absolute;left:1060px;top:557px" width="23" height="25" viewBox="0 0 23 25"><rect x="9" y="0" width="5" height="13" fill="#4a9ef2"/><path d="M2.6 9.6L11.5 18.5L20.4 9.6" fill="none" stroke="#4a9ef2" stroke-width="4"/><path d="M0 17H5L11.5 23.2L18 17H23V25H0Z" fill="#4a9ef2"/></svg>
<div class="t" style="right:190.5px;top:564.84px;font-size:12px;color:#111;font-weight:normal;font-style:normal;letter-spacing:-0.35px">£0.00</div>
<div class="t" style="right:140.5px;top:564.84px;font-size:12px;color:#111;font-weight:normal;font-style:normal;letter-spacing:-0.35px">£0.00</div>
<div class="t" style="right:80px;top:564.84px;font-size:12px;color:#111;font-weight:normal;font-style:normal;">0s</div>
<div class="t" style="right:42px;top:564.84px;font-size:12px;color:#111;font-weight:normal;font-style:italic;">0s</div>
<svg style="position:absolute;left:1335px;top:565.5px" width="9" height="9" viewBox="0 0 9 9"><path d="M4.5 0V9M0 4.5H9" stroke="#6e6e6e" stroke-width="1.6"/></svg>
<div style="position:absolute;left:51px;top:640px;width:11px;height:2px;background:#8e97b2"></div>
<div style="position:absolute;left:141px;top:613px;width:561px;height:20px;background:#43557f"></div>
<div class="t" style="left:421.5px;transform:translateX(-50%);top:617.67px;font-size:12.2px;color:#fff;font-weight:bold;font-style:normal;">TCSpacerBar</div>
<div style="position:absolute;left:140px;top:644px;width:529px;height:22px;border:1px solid #cfcfcf;box-sizing:border-box;background:#fff"></div>
<div style="position:absolute;left:671px;top:640px;width:31px;height:30px;border:1px solid #dcdcdc;box-sizing:border-box;background:#fff"></div>
<svg style="position:absolute;left:676px;top:645px" width="21" height="21" viewBox="0 0 21 21"><rect x="1" y="1" width="19" height="19" fill="none" stroke="#5f6d90" stroke-width="2"/>
<path d="M4 4.8H17M4 7.6H16M4 10.4H10" stroke="#5f6d90" stroke-width="1.4"/><path d="M9.5 17L16 10.5" stroke="#5f6d90" stroke-width="2.6"/></svg>
<div style="position:absolute;left:711px;top:630px;width:100px;height:21px;border:1px solid #d0d0d0;box-sizing:border-box;background:#fff"></div>
<div class="t" style="left:761px;transform:translateX(-50%);top:634.84px;font-size:12px;color:#111;font-weight:normal;font-style:normal;letter-spacing:-0.25px">Mild Steel&nbsp; 2mm</div>
<div class="t" style="left:855px;transform:translateX(-50%);top:634.84px;font-size:12px;color:#111;font-weight:normal;font-style:normal;">1</div>
<div class="t" style="left:935px;transform:translateX(-50%);top:634.84px;font-size:12px;color:#b2b2b2;font-weight:normal;font-style:normal;">1</div>
<svg style="position:absolute;left:985px;top:632px" width="20" height="19" viewBox="0 0 20 19"><path d="M0 6 L6.5 0.3 H19.5 V11.5 L10 19 Q8.3 18.6 8.2 17 L12.5 12.5 H10.8 L3 18.8 Q0.8 18.3 0.8 16.5 L6 10.5 H0 Z" fill="#4a9ef2"/>
<path d="M0 7.3 H15.2 L19.6 3" stroke="#fff" stroke-width="1" fill="none"/><path d="M15.2 7.3 V10.5" stroke="#fff" stroke-width="0.8"/></svg>
<svg style="position:absolute;left:1021px;top:631px" width="26" height="17" viewBox="0 0 26 17"><path d="M13.5 0.5V8" stroke="#4a9ef2" stroke-width="1.2"/><path d="M5.8 8H21.2L26 16.8H0.9Z" fill="#4a9ef2"/><path d="M4.5 11.2H11.8" stroke="#fff" stroke-width="1.1"/><circle cx="13.8" cy="11.4" r="1.8" fill="none" stroke="#fff" stroke-width="1"/></svg>
<svg style="position:absolute;left:1060px;top:627px" width="23" height="25" viewBox="0 0 23 25"><rect x="9" y="0" width="5" height="13" fill="#4a9ef2"/><path d="M2.6 9.6L11.5 18.5L20.4 9.6" fill="none" stroke="#4a9ef2" stroke-width="4"/><path d="M0 17H5L11.5 23.2L18 17H23V25H0Z" fill="#4a9ef2"/></svg>
<div class="t" style="right:190.5px;top:634.84px;font-size:12px;color:#111;font-weight:normal;font-style:normal;letter-spacing:-0.35px">£0.00</div>
<div class="t" style="right:140.5px;top:634.84px;font-size:12px;color:#111;font-weight:normal;font-style:normal;letter-spacing:-0.35px">£0.00</div>
<div class="t" style="right:80px;top:634.84px;font-size:12px;color:#111;font-weight:normal;font-style:normal;">0s</div>
<div class="t" style="right:42px;top:634.84px;font-size:12px;color:#111;font-weight:normal;font-style:italic;">0s</div>
<svg style="position:absolute;left:1335px;top:635.5px" width="9" height="9" viewBox="0 0 9 9"><path d="M4.5 0V9M0 4.5H9" stroke="#6e6e6e" stroke-width="1.6"/></svg>
<div style="position:absolute;left:51px;top:710px;width:11px;height:2px;background:#8e97b2"></div>
<div style="position:absolute;left:141px;top:683px;width:561px;height:20px;background:#43557f"></div>
<div class="t" style="left:421.5px;transform:translateX(-50%);top:687.67px;font-size:12.2px;color:#fff;font-weight:bold;font-style:normal;">TCSidePanel</div>
<div style="position:absolute;left:140px;top:714px;width:529px;height:22px;border:1px solid #cfcfcf;box-sizing:border-box;background:#fff"></div>
<div style="position:absolute;left:671px;top:710px;width:31px;height:30px;border:1px solid #dcdcdc;box-sizing:border-box;background:#fff"></div>
<svg style="position:absolute;left:676px;top:715px" width="21" height="21" viewBox="0 0 21 21"><rect x="1" y="1" width="19" height="19" fill="none" stroke="#5f6d90" stroke-width="2"/>
<path d="M4 4.8H17M4 7.6H16M4 10.4H10" stroke="#5f6d90" stroke-width="1.4"/><path d="M9.5 17L16 10.5" stroke="#5f6d90" stroke-width="2.6"/></svg>
<div style="position:absolute;left:711px;top:700px;width:100px;height:21px;border:1px solid #d0d0d0;box-sizing:border-box;background:#fff"></div>
<div class="t" style="left:761px;transform:translateX(-50%);top:704.84px;font-size:12px;color:#111;font-weight:normal;font-style:normal;letter-spacing:-0.25px">Mild Steel&nbsp; 2mm</div>
<div class="t" style="left:855px;transform:translateX(-50%);top:704.84px;font-size:12px;color:#111;font-weight:normal;font-style:normal;">1</div>
<div class="t" style="left:935px;transform:translateX(-50%);top:704.84px;font-size:12px;color:#b2b2b2;font-weight:normal;font-style:normal;">1</div>
<svg style="position:absolute;left:985px;top:702px" width="20" height="19" viewBox="0 0 20 19"><path d="M0 6 L6.5 0.3 H19.5 V11.5 L10 19 Q8.3 18.6 8.2 17 L12.5 12.5 H10.8 L3 18.8 Q0.8 18.3 0.8 16.5 L6 10.5 H0 Z" fill="#4a9ef2"/>
<path d="M0 7.3 H15.2 L19.6 3" stroke="#fff" stroke-width="1" fill="none"/><path d="M15.2 7.3 V10.5" stroke="#fff" stroke-width="0.8"/></svg>
<svg style="position:absolute;left:1021px;top:701px" width="26" height="17" viewBox="0 0 26 17"><path d="M13.5 0.5V8" stroke="#4a9ef2" stroke-width="1.2"/><path d="M5.8 8H21.2L26 16.8H0.9Z" fill="#4a9ef2"/><path d="M4.5 11.2H11.8" stroke="#fff" stroke-width="1.1"/><circle cx="13.8" cy="11.4" r="1.8" fill="none" stroke="#fff" stroke-width="1"/></svg>
<svg style="position:absolute;left:1060px;top:697px" width="23" height="25" viewBox="0 0 23 25"><rect x="9" y="0" width="5" height="13" fill="#4a9ef2"/><path d="M2.6 9.6L11.5 18.5L20.4 9.6" fill="none" stroke="#4a9ef2" stroke-width="4"/><path d="M0 17H5L11.5 23.2L18 17H23V25H0Z" fill="#4a9ef2"/></svg>
<div class="t" style="right:190.5px;top:704.84px;font-size:12px;color:#111;font-weight:normal;font-style:normal;letter-spacing:-0.35px">£0.00</div>
<div class="t" style="right:140.5px;top:704.84px;font-size:12px;color:#111;font-weight:normal;font-style:normal;letter-spacing:-0.35px">£0.00</div>
<div class="t" style="right:80px;top:704.84px;font-size:12px;color:#111;font-weight:normal;font-style:normal;">0s</div>
<div class="t" style="right:42px;top:704.84px;font-size:12px;color:#111;font-weight:normal;font-style:italic;">0s</div>
<svg style="position:absolute;left:1335px;top:705.5px" width="9" height="9" viewBox="0 0 9 9"><path d="M4.5 0V9M0 4.5H9" stroke="#6e6e6e" stroke-width="1.6"/></svg>
<div style="position:absolute;left:51px;top:780px;width:11px;height:2px;background:#8e97b2"></div>
<div style="position:absolute;left:141px;top:753px;width:561px;height:20px;background:#43557f"></div>
<div class="t" style="left:421.5px;transform:translateX(-50%);top:757.67px;font-size:12.2px;color:#fff;font-weight:bold;font-style:normal;">TCRSHooks</div>
<div style="position:absolute;left:140px;top:784px;width:529px;height:22px;border:1px solid #cfcfcf;box-sizing:border-box;background:#fff"></div>
<div style="position:absolute;left:671px;top:780px;width:31px;height:30px;border:1px solid #dcdcdc;box-sizing:border-box;background:#fff"></div>
<svg style="position:absolute;left:676px;top:785px" width="21" height="21" viewBox="0 0 21 21"><rect x="1" y="1" width="19" height="19" fill="none" stroke="#5f6d90" stroke-width="2"/>
<path d="M4 4.8H17M4 7.6H16M4 10.4H10" stroke="#5f6d90" stroke-width="1.4"/><path d="M9.5 17L16 10.5" stroke="#5f6d90" stroke-width="2.6"/></svg>
<div style="position:absolute;left:711px;top:770px;width:100px;height:21px;border:1px solid #d0d0d0;box-sizing:border-box;background:#fff"></div>
<div class="t" style="left:761px;transform:translateX(-50%);top:774.84px;font-size:12px;color:#111;font-weight:normal;font-style:normal;letter-spacing:-0.25px">Mild Steel&nbsp; 2mm</div>
<div class="t" style="left:855px;transform:translateX(-50%);top:774.84px;font-size:12px;color:#111;font-weight:normal;font-style:normal;">1</div>
<div class="t" style="left:935px;transform:translateX(-50%);top:774.84px;font-size:12px;color:#b2b2b2;font-weight:normal;font-style:normal;">1</div>
<svg style="position:absolute;left:985px;top:772px" width="20" height="19" viewBox="0 0 20 19"><path d="M0 6 L6.5 0.3 H19.5 V11.5 L10 19 Q8.3 18.6 8.2 17 L12.5 12.5 H10.8 L3 18.8 Q0.8 18.3 0.8 16.5 L6 10.5 H0 Z" fill="#4a9ef2"/>
<path d="M0 7.3 H15.2 L19.6 3" stroke="#fff" stroke-width="1" fill="none"/><path d="M15.2 7.3 V10.5" stroke="#fff" stroke-width="0.8"/></svg>
<svg style="position:absolute;left:1021px;top:771px" width="26" height="17" viewBox="0 0 26 17"><path d="M13.5 0.5V8" stroke="#4a9ef2" stroke-width="1.2"/><path d="M5.8 8H21.2L26 16.8H0.9Z" fill="#4a9ef2"/><path d="M4.5 11.2H11.8" stroke="#fff" stroke-width="1.1"/><circle cx="13.8" cy="11.4" r="1.8" fill="none" stroke="#fff" stroke-width="1"/></svg>
<svg style="position:absolute;left:1060px;top:767px" width="23" height="25" viewBox="0 0 23 25"><rect x="9" y="0" width="5" height="13" fill="#4a9ef2"/><path d="M2.6 9.6L11.5 18.5L20.4 9.6" fill="none" stroke="#4a9ef2" stroke-width="4"/><path d="M0 17H5L11.5 23.2L18 17H23V25H0Z" fill="#4a9ef2"/></svg>
<div class="t" style="right:190.5px;top:774.84px;font-size:12px;color:#111;font-weight:normal;font-style:normal;letter-spacing:-0.35px">£0.00</div>
<div class="t" style="right:140.5px;top:774.84px;font-size:12px;color:#111;font-weight:normal;font-style:normal;letter-spacing:-0.35px">£0.00</div>
<div class="t" style="right:80px;top:774.84px;font-size:12px;color:#111;font-weight:normal;font-style:normal;">0s</div>
<div class="t" style="right:42px;top:774.84px;font-size:12px;color:#111;font-weight:normal;font-style:italic;">0s</div>
<svg style="position:absolute;left:1335px;top:775.5px" width="9" height="9" viewBox="0 0 9 9"><path d="M4.5 0V9M0 4.5H9" stroke="#6e6e6e" stroke-width="1.6"/></svg>
<svg style="position:absolute;left:68px;top:336px" width="26" height="52" viewBox="0 0 26 52"><path d="M4 9H11.5L13 10.5H17M4 9V35M2.5 13V35M2.4 25H12" fill="none" stroke="#111" stroke-width="1"/><path d="M5.5 9V35M7.5 9V35M9.6 9V35" stroke="#1a1aff" stroke-width="0.9"/><rect x="14.2" y="19.8" width="1.6" height="9.7" fill="#9de000"/><path d="M17.3 2V49M17 4H26M17 6.4H26M17 38H26M17 43H26M17 46H26" stroke="#1a1aff" stroke-width="0.9"/><path d="M17 1.5H26M17 49H26" stroke="#111" stroke-width="1.3"/><rect x="17.8" y="11" width="7.5" height="25" fill="#8a8a8a"/><path d="M18 13L25 16M18 17L25 20M18 21L25 24M18 25L25 28M18 29L25 32" stroke="#111" stroke-width="1.2"/></svg>
<svg style="position:absolute;left:70px;top:414px" width="58" height="34" viewBox="0 0 58 34"><path d="M1.5 0V31.5H55.5V0" fill="none" stroke="#1a1aff" stroke-width="1.6"/><path d="M3 14H6M53 14H56M28 31H33" stroke="#222" stroke-width="1"/></svg>
<svg style="position:absolute;left:70px;top:474px" width="58" height="53" viewBox="0 0 58 53"><defs><pattern id="mesh" width="3.2" height="3.2" patternUnits="userSpaceOnUse"><rect width="3.2" height="3.2" fill="#fff"/><circle cx="1.6" cy="1.6" r="1.0" fill="none" stroke="#222" stroke-width="0.55"/></pattern></defs><rect x="0.5" y="0.5" width="57" height="52" fill="#fff" stroke="#222" stroke-width="1"/><path d="M1 4.5H57M1 48.5H57" stroke="#1a1aff" stroke-width="1.2"/><rect x="3" y="7" width="52" height="39" fill="url(#mesh)"/></svg>
<svg style="position:absolute;left:70px;top:546px" width="57" height="51" viewBox="0 0 57 51"><rect x="0.5" y="0.5" width="56" height="50" fill="#fff" stroke="#222" stroke-width="1"/><path d="M1 3.5H56M1 6H56M1 44.5H56M1 47H56" stroke="#1a1aff" stroke-width="1"/><g fill="#222"><circle cx="20" cy="11" r="0.8"/><circle cx="20" cy="18" r="0.8"/><circle cx="20" cy="25" r="0.8"/><circle cx="20" cy="32" r="0.8"/><circle cx="20" cy="38" r="0.8"/><circle cx="46" cy="11" r="0.6"/><circle cx="46" cy="25" r="0.6"/><circle cx="46" cy="38" r="0.6"/></g></svg>
<svg style="position:absolute;left:70px;top:635px" width="57" height="8" viewBox="0 0 57 8"><rect x="1" y="1" width="55" height="5" fill="#fff" stroke="#222" stroke-width="1"/><path d="M1 2.5H56" stroke="#1010ff" stroke-width="1"/></svg>
<svg style="position:absolute;left:73px;top:682px" width="53" height="58" viewBox="0 0 53 58"><path d="M3 1H50M1 3V10M52 3V10M1 11V56H52V11" fill="none" stroke="#222" stroke-width="1"/><path d="M2 3H51M2 11H51M2 11V55H51V11" fill="none" stroke="#1010ff" stroke-width="1"/></svg>
<svg style="position:absolute;left:70px;top:769px" width="58" height="12" viewBox="0 0 58 12"><path d="M1 8H57M1 10.5H57" stroke="#111" stroke-width="1"/><g stroke="#111" stroke-width="1.2" fill="none"><path d="M3 3V9M6 3V8M15 4V9M19 4V9M28 4V9M31 4V9M40 5V9M44 5V9M52 6V9M55 6V9"/></g><path d="M2 3H12" stroke="#1010ff"/></svg>
<div style="position:absolute;left:67px;top:372px;width:20px;height:20px;border:1px solid #d8d8d8;box-sizing:border-box;background:#fff"></div>
<svg style="position:absolute;left:73px;top:377px" width="8" height="11" viewBox="0 0 8 11"><path d="M0.4 3.6L3.9 0.2L7.4 3.6Z M0.4 6.8L3.9 10.2L7.4 6.8Z" fill="#8a8a8a"/></svg>
<div style="position:absolute;left:67px;top:442px;width:20px;height:20px;border:1px solid #d8d8d8;box-sizing:border-box;background:#fff"></div>
<svg style="position:absolute;left:73px;top:447px" width="8" height="11" viewBox="0 0 8 11"><path d="M0.4 3.6L3.9 0.2L7.4 3.6Z M0.4 6.8L3.9 10.2L7.4 6.8Z" fill="#8a8a8a"/></svg>
<div style="position:absolute;left:67px;top:512px;width:20px;height:20px;border:1px solid #d8d8d8;box-sizing:border-box;background:#fff"></div>
<svg style="position:absolute;left:73px;top:517px" width="8" height="11" viewBox="0 0 8 11"><path d="M0.4 3.6L3.9 0.2L7.4 3.6Z M0.4 6.8L3.9 10.2L7.4 6.8Z" fill="#8a8a8a"/></svg>
<div style="position:absolute;left:67px;top:582px;width:20px;height:20px;border:1px solid #d8d8d8;box-sizing:border-box;background:#fff"></div>
<svg style="position:absolute;left:73px;top:587px" width="8" height="11" viewBox="0 0 8 11"><path d="M0.4 3.6L3.9 0.2L7.4 3.6Z M0.4 6.8L3.9 10.2L7.4 6.8Z" fill="#8a8a8a"/></svg>
<div style="position:absolute;left:67px;top:652px;width:20px;height:20px;border:1px solid #d8d8d8;box-sizing:border-box;background:#fff"></div>
<svg style="position:absolute;left:73px;top:657px" width="8" height="11" viewBox="0 0 8 11"><path d="M0.4 3.6L3.9 0.2L7.4 3.6Z M0.4 6.8L3.9 10.2L7.4 6.8Z" fill="#8a8a8a"/></svg>
<div style="position:absolute;left:67px;top:722px;width:20px;height:20px;border:1px solid #d8d8d8;box-sizing:border-box;background:#fff"></div>
<svg style="position:absolute;left:73px;top:727px" width="8" height="11" viewBox="0 0 8 11"><path d="M0.4 3.6L3.9 0.2L7.4 3.6Z M0.4 6.8L3.9 10.2L7.4 6.8Z" fill="#8a8a8a"/></svg>
<div style="position:absolute;left:67px;top:792px;width:20px;height:20px;border:1px solid #d8d8d8;box-sizing:border-box;background:#fff"></div>
<svg style="position:absolute;left:73px;top:797px" width="8" height="11" viewBox="0 0 8 11"><path d="M0.4 3.6L3.9 0.2L7.4 3.6Z M0.4 6.8L3.9 10.2L7.4 6.8Z" fill="#8a8a8a"/></svg>
<div style="position:absolute;left:93px;top:297px;width:461px;height:126px;border:1px solid #cfcfcf;box-sizing:border-box;background:#fff"></div>
<svg style="position:absolute;left:100px;top:312px" width="140" height="95" viewBox="0 0 140 95">
<path d="M0 64L48 58L66 90L22 80Z" fill="#d9d9d9"/>
<path d="M8.2 31.3L49.5 27L49.5 62.7L17.6 76.5Z" fill="#2f8a2f"/>
<path d="M10.5 32.5L48.5 29L48.5 62L19 74Z" fill="url(#tex)"/>
<path d="M49.5 27L65 33L65 72L49.5 62.7Z" fill="url(#tex)"/><path d="M49.5 62.7L65 72L65 84L51 72Z" fill="#9a9a9a"/>
<path d="M50 24.5L125 18.8L125 26.5L65 33.5L50 30Z" fill="#353535"/>
<path d="M77 7H86V24H77Z" fill="#3c3c3c"/>
<path d="M86 7H111Q115 7 115 12V19L86 23Z" fill="#46b446"/>
<path d="M77 20L125 17V22L77 25Z" fill="#2a2a2a"/>
<path d="M97 29L125 26.5L125 69L97 75Z" fill="url(#tex2)"/>
<path d="M65 33.5L97.6 29L97.6 75L65 81Z" fill="#3fa83f"/>
<path d="M67.5 37L114 33L114 50L95 55L95 72L67.5 77Z" fill="#171717"/>
<path d="M69 45L110 40.5M69 55L94 51M69 65L94 61" stroke="#505050" stroke-width="1.6"/>

<path d="M125 23.5L133 24.5" stroke="#333" stroke-width="2"/>
<circle cx="53.3" cy="70.8" r="2.4" fill="#eee" stroke="#222" stroke-width="1.3"/>
<circle cx="64.6" cy="86" r="2.9" fill="#eee" stroke="#222" stroke-width="1.5"/>
<circle cx="111" cy="68.5" r="2.4" fill="#eee" stroke="#222" stroke-width="1.3"/>
</svg>
<div class="t" style="left:258px;top:302.67px;font-size:12.2px;color:#111;font-weight:bold;font-style:normal;">TC Tool Cabinet 20181009-20091 | 20181009-20091</div>
<div class="t" style="right:1062px;top:323.84px;font-size:12px;color:#222;font-weight:normal;font-style:normal;">X</div>
<div class="t" style="left:313px;top:323.84px;font-size:12px;color:#222;font-weight:normal;font-style:normal;">:</div>
<div class="t" style="left:327px;top:323.84px;font-size:12px;color:#222;font-weight:normal;font-style:normal;">0.00 mm</div>
<div class="t" style="right:1062px;top:349.84px;font-size:12px;color:#222;font-weight:normal;font-style:normal;">Y</div>
<div class="t" style="left:313px;top:349.84px;font-size:12px;color:#222;font-weight:normal;font-style:normal;">:</div>
<div class="t" style="left:327px;top:349.84px;font-size:12px;color:#222;font-weight:normal;font-style:normal;">0.00 mm</div>
<div class="t" style="right:1062px;top:375.84px;font-size:12px;color:#222;font-weight:normal;font-style:normal;">Surface</div>
<div class="t" style="left:313px;top:375.84px;font-size:12px;color:#222;font-weight:normal;font-style:normal;">:</div>
<div class="t" style="left:327px;top:375.84px;font-size:12px;color:#222;font-weight:normal;font-style:normal;">0.00 mm²</div>
<div class="t" style="right:1062px;top:401.84px;font-size:12px;color:#222;font-weight:normal;font-style:normal;">Weight</div>
<div class="t" style="left:313px;top:401.84px;font-size:12px;color:#222;font-weight:normal;font-style:normal;">:</div>
<div class="t" style="left:327px;top:401.84px;font-size:12px;color:#222;font-weight:normal;font-style:normal;">0.000 kg</div>
<svg style="position:absolute;left:1354px;top:156px" width="7" height="5" viewBox="0 0 7 5"><path d="M0 4.2L3.5 0.3L7 4.2Z" fill="#606060"/></svg>
<div style="position:absolute;left:1355px;top:165px;width:4px;height:170px;background:#d2d2d2"></div>
<svg style="position:absolute;left:1354px;top:772px" width="7" height="5" viewBox="0 0 7 5"><path d="M0 0.3L3.5 4.2L7 0.3Z" fill="#606060"/></svg>
<div style="position:absolute;left:0px;top:0px;width:1365px;height:782px;border:1px solid #1f1b55;box-sizing:border-box"></div>
</body></html>
